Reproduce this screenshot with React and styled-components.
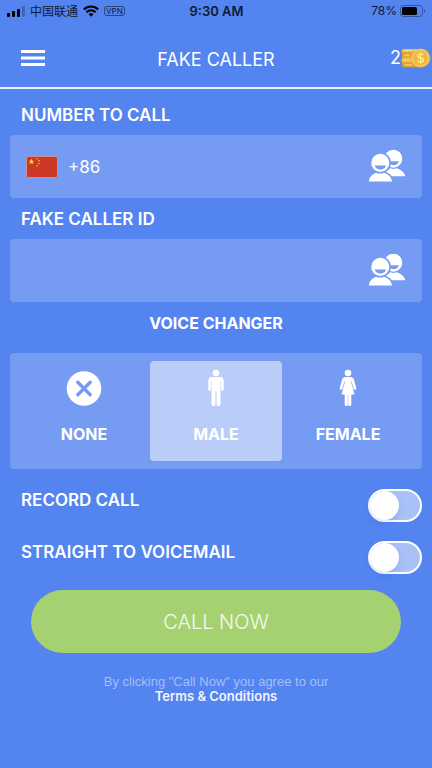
import React, { useState } from "react";
import styled, { createGlobalStyle } from "styled-components";

const colors = {
  page: "#5384f0",
  panel: "#759bf3",
  selected: "#bacdf9",
  green: "#a5d170",
};

const GlobalStyle = createGlobalStyle`
  *, *::before, *::after { box-sizing: border-box; }
  body {
    margin: 0;
    background: ${colors.page};
    color: #fff;
    font-family: Inter, "Noto Sans CJK SC", sans-serif;
  }
  button, input { font: inherit; color: inherit; }
  svg { display: block; flex: none; }
`;

const Screen = styled.div`
  min-height: 100vh;
`;

const StatusBar = styled.div`
  display: grid;
  grid-template-columns: 1fr auto 1fr;
  align-items: center;
  height: 22px;
  padding: 0 6px 0 7px;
  color: #101a30;
  font-size: 12px;
  line-height: 22px;
`;

const StatusGroup = styled.div`
  display: flex;
  align-items: center;
  justify-content: ${(p) => (p.$end ? "flex-end" : "flex-start")};
  gap: ${(p) => (p.$end ? 3 : 5)}px;
`;

const Carrier = styled.span`
  font-family: "Noto Sans CJK SC", sans-serif;
`;

const VpnBadge = styled.span`
  border: 1px solid #2d4478;
  border-radius: 3px;
  padding: 0 1px;
  font-size: 8px;
  line-height: 8px;
`;

const Clock = styled.time`
  font-size: 13px;
  font-weight: 600;
`;

const Header = styled.header`
  display: grid;
  grid-template-columns: 1fr auto 1fr;
  align-items: center;
  height: 67px;
  padding-top: 6px;
  border-bottom: 2px solid #e9effd;
`;

const MenuButton = styled.button`
  justify-self: start;
  margin-left: 20px;
  border: 0;
  padding: 0;
  background: none;
`;

const Title = styled.h1`
  margin: 0;
  padding-top: 4px;
  font-size: 18px;
  font-weight: 400;
  line-height: 24px;
`;

const Credits = styled.div`
  display: flex;
  align-items: center;
  justify-content: flex-end;
  padding-right: 1px;
  font-size: 18px;
  line-height: 24px;
`;

const Form = styled.form`
  display: flex;
  flex-direction: column;
  padding: 15px 10px 0;
`;

const FieldLabel = styled.label`
  padding-left: 11px;
  font-size: 17px;
  font-weight: 600;
  line-height: 22px;
`;

const Field = styled.div`
  display: flex;
  align-items: center;
  height: 63px;
  margin: 9px 0 10px;
  padding: 0 16px;
  border-radius: 4px;
  background: ${colors.panel};
`;

const FieldInput = styled.input`
  flex: 1;
  min-width: 0;
  border: 0;
  padding: 0 10px;
  background: none;
  font-size: 17px;
  line-height: 24px;
  outline: none;
`;

const IconButton = styled.button`
  border: 0;
  padding: 0;
  background: none;
`;

const VoiceGroup = styled.fieldset`
  min-width: 0;
  margin: 0;
  border: 0;
  padding: 0;
`;

const VoiceTitle = styled.legend`
  width: 100%;
  padding: 0;
  font-size: 16px;
  font-weight: 700;
  line-height: 22px;
  text-align: center;
`;

const VoiceOptions = styled.div`
  display: grid;
  grid-template-columns: repeat(3, 1fr);
  margin: 19px 0 20px;
  padding: 8px;
  border-radius: 4px;
  background: ${colors.panel};
`;

const VoiceOption = styled.label`
  display: flex;
  flex-direction: column;
  align-items: center;
  gap: 16px;
  height: 100px;
  padding-top: 8px;
  border-radius: 4px;
  background: ${(p) => (p.$selected ? colors.selected : "transparent")};
  font-size: 16px;
  font-weight: 700;
  line-height: 22px;
  cursor: pointer;
`;

const HiddenRadio = styled.input`
  position: absolute;
  opacity: 0;
  pointer-events: none;
`;

const SwitchRow = styled.div`
  display: flex;
  align-items: flex-start;
  justify-content: space-between;
  margin-bottom: ${(p) => (p.$last ? 16 : 19)}px;
`;

const Switch = styled.input`
  appearance: none;
  display: flex;
  width: 54px;
  height: 33px;
  margin: 0;
  border: 2px solid #fff;
  border-radius: 17px;
  background: #a9c1f7;
  cursor: pointer;

  &::before {
    content: "";
    width: 29px;
    height: 29px;
    border-radius: 50%;
    background: #fff;
    box-shadow: 0 3px 6px rgba(40, 80, 180, 0.15);
  }
  &:checked { justify-content: flex-end; background: ${colors.green}; }
`;

const CallButton = styled.button`
  height: 63px;
  margin: 0 21px;
  border: 0;
  border-radius: 32px;
  background: ${colors.green};
  color: #f4f9ee;
  font-size: 20px;
  font-weight: 300;
  cursor: pointer;
`;

const Agreement = styled.p`
  display: flex;
  flex-direction: column;
  align-items: center;
  margin: 21px 0;
  color: #a5bff7;
  font-family: "Liberation Sans", sans-serif;
  font-size: 13px;
  line-height: 15px;
`;

const TermsLink = styled.a`
  color: #f1f5fe;
  font-family: Inter, sans-serif;
  font-weight: 600;
  text-decoration: none;
`;

function SignalIcon() {
  return (
    <svg width="18" height="11" viewBox="0 0 18 11" aria-hidden="true">
      <rect x="0" y="7" width="3" height="4" rx="1" fill="#000" />
      <rect x="5" y="5" width="3" height="6" rx="1" fill="#000" />
      <rect x="10" y="3" width="3" height="8" rx="1" fill="#000" />
      <rect x="15" y="0" width="3" height="11" rx="1" fill="#3f65bb" />
    </svg>
  );
}

function WifiIcon() {
  return (
    <svg width="16" height="12" viewBox="0 0 16 12" fill="none" stroke="#000" strokeWidth="2.1" aria-hidden="true">
      <path d="M.9 4.4a10 10 0 0 1 14.2 0" />
      <path d="M3.5 7.2a6.3 6.3 0 0 1 9 0" />
      <path d="M5.6 9.3a3.4 3.4 0 0 1 4.8 0L8 11.8Z" fill="#000" stroke="none" />
    </svg>
  );
}

function BatteryIcon() {
  return (
    <svg width="26" height="12" viewBox="0 0 26 12" aria-hidden="true">
      <rect x=".5" y=".5" width="22" height="11" rx="3" fill="none" stroke="#355599" />
      <rect x="2" y="2" width="15" height="8" rx="1.5" fill="#000" />
      <path d="M24 4v4c1.600-.6 1.600-3.400 0-4Z" fill="#355599" />
    </svg>
  );
}

function MenuIcon() {
  return (
    <svg width="25" height="18" viewBox="0 0 25 18" fill="#fff" aria-hidden="true">
      <rect x="1" y="1" width="24" height="3" />
      <rect x="1" y="7.500" width="24" height="3" />
      <rect x="1" y="14" width="24" height="3" />
    </svg>
  );
}

function CoinsIcon() {
  return (
    <svg width="30" height="20" viewBox="0 0 30 20" aria-hidden="true">
      <rect x=".5" y="1" width="17" height="5" rx="2.500" fill="#f0bd4e" />
      <rect x="1" y="4" width="16" height="13" fill="#dfa036" />
      <rect x="1.500" y="5.500" width="17" height="5" rx="2.500" fill="#e6a93a" />
      <rect x=".5" y="10" width="17" height="5" rx="2.500" fill="#f0bd4e" />
      <rect x="1" y="14.300" width="18" height="5" rx="2.500" fill="#e2a137" />
      <path d="M3 2.800h8M4 7.300h4M3 12h5M4 16.800h7" stroke="#ffdc80" strokeWidth="1" />
      <rect x="10" y=".8" width="19.500" height="18.400" rx="9.200" fill="#e3a43c" />
      <circle cx="19.500" cy="10" r="9.200" fill="#f6c658" />
      <circle cx="19.500" cy="10" r="7" fill="#efb647" />
      <path d="M22.300 7.300c-.6-1.200-1.500-1.500-2.800-1.500-3.700 0-3.700 3.800 0 4.200 3.900.4 3.800 4.200 0 4.200-1.500 0-2.500-.5-3-1.700M19.500 4.200v11.600" fill="none" stroke="#fff07c" strokeWidth="1.300" />
    </svg>
  );
}

const STAR = "M0-1 .225-.309H.951L.363.118.588.809 0 .382-.588.809-.363.118-.951-.309H-.225Z";

function ChinaFlag() {
  return (
    <svg width="32" height="22" viewBox="0 0 32 22" role="img" aria-label="China">
      <rect x=".5" y=".5" width="31" height="21" rx="1.500" fill="#cb3825" stroke="#c98f91" />
      <g fill="#fbd83b">
        <path d={STAR} transform="translate(5.500 5.700) scale(3.300)" />
        <path d={STAR} transform="translate(11 2.600) scale(1.200)" />
        <path d={STAR} transform="translate(13 4.700) scale(1.200)" />
        <path d={STAR} transform="translate(13 7.600) scale(1.200)" />
        <path d={STAR} transform="translate(11 9.900) scale(1.200)" />
      </g>
    </svg>
  );
}

function ContactsIcon() {
  return (
    <svg width="38" height="36" viewBox="0 0 38 36" fill="#fff" aria-hidden="true">
      <path d="M13 27.200c1-4.800 4.600-7.200 12-8.700 7 1 11 4 12.200 8.700Z" />
      <circle cx="25.300" cy="9.700" r="9.700" stroke={colors.panel} strokeWidth="1.300" />
      <path d="M20.200 12.300h10.600c-.8 5.200-8.800 5.200-10.600 0Z" fill={colors.panel} />
      <path d="M-.3 33.200c.5-5.500 4.600-10.200 12.600-11 8 .8 12.100 5.500 12.900 11Z" stroke={colors.panel} strokeWidth="1.600" />
      <circle cx="12.300" cy="13.900" r="9.900" stroke={colors.panel} strokeWidth="1.600" />
      <path d="M6.600 16.600h11.400c-1 5.400-10 5.400-11.400 0Z" fill={colors.panel} />
    </svg>
  );
}

function NoneIcon() {
  return (
    <svg width="36" height="38" viewBox="0 0 36 38" aria-hidden="true">
      <circle cx="18" cy="19.500" r="17.300" fill="#fff" />
      <path d="m10.800 12.300 14.400 14.400m0-14.400L10.800 26.700" stroke={colors.panel} strokeWidth="3.400" />
    </svg>
  );
}

function MaleIcon() {
  return (
    <svg width="18" height="38" viewBox="0 0 18 38" fill="#fff" aria-hidden="true">
      <circle cx="9" cy="4" r="3.300" />
      <path d="M5 8h8c2.500 0 3.700 1.500 3.700 3.700v8.600c0 2-2.600 2-2.600 0v-8h-.6v23.300c0 2.200-4 2.200-4 0V22h-1v13.600c0 2.200-4 2.200-4 0V12.300h-.6v8c0 2-2.600 2-2.600 0v-8.600C1.300 9.500 2.500 8 5 8Z" />
    </svg>
  );
}

function FemaleIcon() {
  return (
    <svg width="18" height="38" viewBox="0 0 18 38" fill="#fff" aria-hidden="true">
      <circle cx="9" cy="4" r="3.300" />
      <path d="M6.500 8h5c2 0 3 1 3.500 2.800l2.200 8.200c.4 1.900-1.900 2.500-2.500.8l-2.300-7.600h-.5l3.700 13.200h-3.300v10.300c0 1.900-3.100 1.900-3.100 0V25.400h-.4v10.300c0 1.900-3.100 1.900-3.100 0V25.400H2.400l3.700-13.200h-.5l-2.300 7.600C2.700 21.500.4 20.900.8 19L3 10.800C3.500 9 4.500 8 6.500 8Z" />
    </svg>
  );
}

const VOICES = [
  { id: "none", label: "NONE", Icon: NoneIcon },
  { id: "male", label: "MALE", Icon: MaleIcon },
  { id: "female", label: "FEMALE", Icon: FemaleIcon },
];

export default function App() {
  const [number, setNumber] = useState("+86");
  const [callerId, setCallerId] = useState("");
  const [voice, setVoice] = useState("male");

  return (
    <Screen>
      <GlobalStyle />
      <StatusBar>
        <StatusGroup>
          <SignalIcon />
          <Carrier>中国联通</Carrier>
          <WifiIcon />
          <VpnBadge>VPN</VpnBadge>
        </StatusGroup>
        <Clock>9:30 AM</Clock>
        <StatusGroup $end>
          <span>78%</span>
          <BatteryIcon />
        </StatusGroup>
      </StatusBar>
      <Header>
        <MenuButton type="button" aria-label="Menu">
          <MenuIcon />
        </MenuButton>
        <Title>FAKE CALLER</Title>
        <Credits>
          <span>2</span>
          <CoinsIcon />
        </Credits>
      </Header>
      <Form onSubmit={(e) => e.preventDefault()}>
        <FieldLabel htmlFor="number">NUMBER TO CALL</FieldLabel>
        <Field>
          <IconButton type="button" aria-label="Choose country">
            <ChinaFlag />
          </IconButton>
          <FieldInput id="number" type="tel" value={number} onChange={(e) => setNumber(e.target.value)} />
          <IconButton type="button" aria-label="Choose number from contacts">
            <ContactsIcon />
          </IconButton>
        </Field>
        <FieldLabel htmlFor="caller-id">FAKE CALLER ID</FieldLabel>
        <Field>
          <FieldInput id="caller-id" type="tel" value={callerId} onChange={(e) => setCallerId(e.target.value)} />
          <IconButton type="button" aria-label="Choose caller ID from contacts">
            <ContactsIcon />
          </IconButton>
        </Field>
        <VoiceGroup>
          <VoiceTitle>VOICE CHANGER</VoiceTitle>
          <VoiceOptions>
            {VOICES.map(({ id, label, Icon }) => (
              <VoiceOption key={id} $selected={voice === id}>
                <HiddenRadio type="radio" name="voice" value={id} checked={voice === id} onChange={() => setVoice(id)} />
                <Icon />
                {label}
              </VoiceOption>
            ))}
          </VoiceOptions>
        </VoiceGroup>
        <SwitchRow>
          <FieldLabel htmlFor="record">RECORD CALL</FieldLabel>
          <Switch id="record" type="checkbox" role="switch" />
        </SwitchRow>
        <SwitchRow $last>
          <FieldLabel htmlFor="voicemail">STRAIGHT TO VOICEMAIL</FieldLabel>
          <Switch id="voicemail" type="checkbox" role="switch" />
        </SwitchRow>
        <CallButton type="submit">CALL NOW</CallButton>
        <Agreement>
          <span>By clicking "Call Now" you agree to our</span>
          <TermsLink href="#terms">Terms &amp; Conditions</TermsLink>
        </Agreement>
      </Form>
    </Screen>
  );
}
